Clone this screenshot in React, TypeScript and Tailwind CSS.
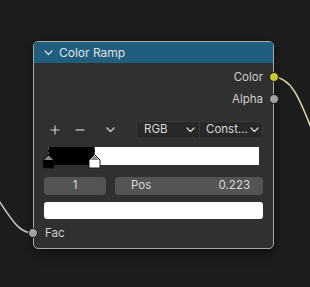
import React from 'react';

// Small stroke icons used in the node
const Chevron = ({ className = '' }: { className?: string }) => (
  <svg width="9" height="6" viewBox="0 0 9 6" className={className}>
    <path d="M1 1 L4.5 4.5 L8 1" fill="none" stroke="currentColor" strokeWidth="1.3" strokeLinecap="round" strokeLinejoin="round" />
  </svg>
);

const Socket = ({ color, className }: { color: string; className: string }) => (
  <div
    className={`absolute w-[10px] h-[10px] rounded-full border border-[#1a1a1a] ${className}`}
    style={{ backgroundColor: color }}
  />
);

// Colour stop marker under the ramp
const Stop = ({ fill, left }: { fill: string; left: string }) => (
  <svg width="13" height="15" viewBox="0 0 13 15" className={`absolute top-[7px] ${left}`}>
    <path d="M6.5 0.5 L12 6 L12 14 L1 14 L1 6 Z" fill={fill} stroke="#1a1a1a" strokeWidth="1" />
    <path d="M6.5 1.5 L11 6 L2 6 Z" fill="#8a8a8a" />
  </svg>
);

export default function App() {
  return (
    <div
      className="relative w-[310px] h-[287px] overflow-hidden bg-[#1d1d1d] text-[11.5px] text-[#d8d8d8]"
      style={{ fontFamily: 'Inter, "Noto Sans", sans-serif' }}
    >
      {/* wires */}
      <svg className="absolute inset-0" width="310" height="287">
        <path d="M273 77 C292 77, 300 100, 314 135" fill="none" stroke="#d8d6a0" strokeWidth="1.6" />
        <path d="M-6 194 C8 212, 16 233, 33 233" fill="none" stroke="#c4c4c4" strokeWidth="1.6" />
      </svg>

      {/* node */}
      <div className="absolute left-[33px] top-[41px] w-[241px] h-[208px] rounded-[5px] border border-[#a8a8a8] bg-[#303030] shadow-[0_4px_12px_rgba(0,0,0,0.5)]">
        <div className="flex items-center h-[21px] pl-[10px] gap-[6px] rounded-t-[4px] bg-[#1f5e7e] text-[#e0e0e0] text-[12px]">
          <Chevron className="text-[#d8d8d8]" />
          <span>Color Ramp</span>
        </div>

        <div className="relative flex flex-col px-[10px]">
          <div className="flex items-center justify-end h-[22px] mt-[4px] text-[#cfcfcf]">Color</div>
          <div className="flex items-center justify-end h-[22px] text-[#cfcfcf]">Alpha</div>

          <div className="flex items-center h-[18px] mt-[10px]">
            <div className="flex items-center w-[92px] text-[#cfcfcf]">
              <svg width="10" height="10" viewBox="0 0 10 10" className="ml-[6px]">
                <path d="M5 0.5 V9.5 M0.5 5 H9.5" stroke="currentColor" strokeWidth="1.2" />
              </svg>
              <svg width="10" height="10" viewBox="0 0 10 10" className="ml-[15px]">
                <path d="M0.5 5 H9.5" stroke="currentColor" strokeWidth="1.2" />
              </svg>
              <Chevron className="ml-[21px]" />
            </div>
            <div className="flex flex-1 h-[18px] rounded-[4px] border border-[#3a3a3a] bg-[#282828] text-[#d8d8d8]">
              <div className="flex items-center justify-between w-[63px] pl-[7px] pr-[4px] border-r border-[#3a3a3a]">
                <span>RGB</span>
                <Chevron />
              </div>
              <div className="flex flex-1 items-center justify-between pl-[6px] pr-[3px]">
                <span>Const...</span>
                <Chevron />
              </div>
            </div>
          </div>

          <div className="relative h-[24px] mt-[8px] mx-[4px]">
            <div className="flex h-[18px]">
              <div className="w-[47px] bg-black border-x border-dashed border-[#555]" />
              <div className="flex-1 bg-white" />
            </div>
            <Stop fill="#000000" left="left-[-6px]" />
            <Stop fill="#ffffff" left="left-[40px]" />
          </div>

          <div className="flex h-[18px] mt-[6px] gap-[9px] text-[#d8d8d8]">
            <div className="flex items-center justify-center w-[62px] rounded-[4px] bg-[#545454]">1</div>
            <div className="flex flex-1 items-center justify-between pl-[16px] pr-[13px] rounded-[4px] bg-[#545454]">
              <span>Pos</span>
              <span>0.223</span>
            </div>
          </div>

          <div className="h-[17px] mt-[7px] rounded-[3px] bg-white" />

          <div className="flex items-center h-[22px] mt-[4px] pl-[1px] text-[#cfcfcf]">Fac</div>
        </div>

        <Socket color="#c9c92a" className="left-[235px] top-[30px]" />
        <Socket color="#a1a1a1" className="left-[235px] top-[52px]" />
        <Socket color="#a1a1a1" className="left-[-6px] top-[186px]" />
      </div>
    </div>
  );
}
